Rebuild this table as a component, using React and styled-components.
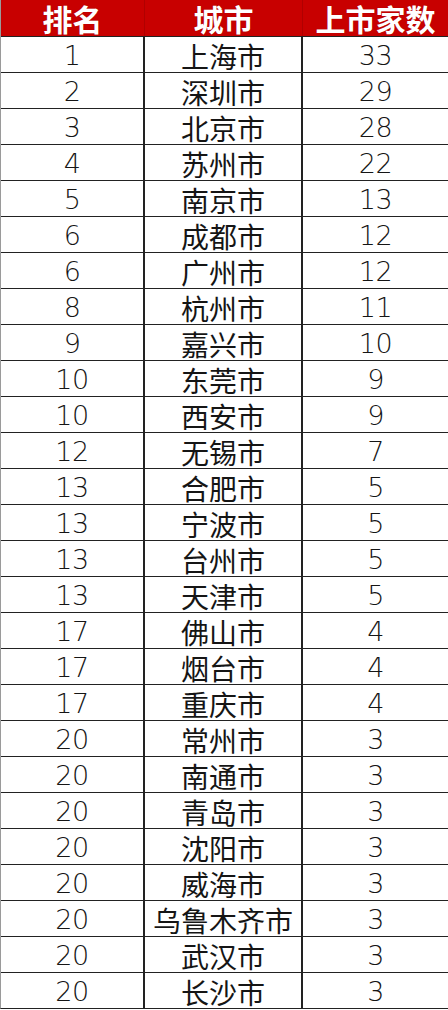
import React from "react";
import styled, { createGlobalStyle } from "styled-components";

const Global = createGlobalStyle`
  html, body { margin: 0; padding: 0; background: #fff; }
  body { font-family: "Noto Sans CJK SC", "Noto Sans", sans-serif; }
`;

const rows = [
  [1, "上海市", 33], [2, "深圳市", 29], [3, "北京市", 28], [4, "苏州市", 22],
  [5, "南京市", 13], [6, "成都市", 12], [6, "广州市", 12], [8, "杭州市", 11],
  [9, "嘉兴市", 10], [10, "东莞市", 9], [10, "西安市", 9], [12, "无锡市", 7],
  [13, "合肥市", 5], [13, "宁波市", 5], [13, "台州市", 5], [13, "天津市", 5],
  [17, "佛山市", 4], [17, "烟台市", 4], [17, "重庆市", 4], [20, "常州市", 3],
  [20, "南通市", 3], [20, "青岛市", 3], [20, "沈阳市", 3], [20, "威海市", 3],
  [20, "乌鲁木齐市", 3], [20, "武汉市", 3], [20, "长沙市", 3],
];

const Table = styled.div`
  width: 447px;
  display: grid;
  grid-template-columns: 144px 158px 145px;
  border-left: 1px solid #9a9a9a;
  border-bottom: 1px solid #222;
`;

const HeadCell = styled.div`
  height: 36px;
  display: flex;
  align-items: center;
  justify-content: center;
  background: #c80000;
  color: #fff;
  font-weight: 700;
  font-size: 30px;
  line-height: 1;
  white-space: nowrap;
  box-sizing: border-box;
  text-shadow: 0 0 1px rgba(120, 0, 0, 0.6);
  border-right: ${(p) => (p.$last ? "none" : "1px solid #b00000")};
`;

const Cell = styled.div`
  height: 36px;
  display: flex;
  align-items: center;
  justify-content: center;
  box-sizing: border-box;
  padding-top: 2px;
  border-top: 1px solid #222;
  border-right: ${(p) => (p.$last ? "none" : "2px solid #222")};
  color: #151515;
  font-size: ${(p) => (p.$num ? "27px" : "28px")};
  line-height: 1;
  white-space: nowrap;
  font-family: ${(p) =>
    p.$num ? '"DejaVu Sans", sans-serif' : '"Noto Sans CJK SC", sans-serif'};
  font-weight: ${(p) => (p.$num ? 300 : 400)};
  letter-spacing: ${(p) => (p.$num ? "-0.5px" : "0px")};
`;

export default function App() {
  return (
    <>
      <Global />
      <Table>
        <HeadCell>排名</HeadCell>
        <HeadCell>城市</HeadCell>
        <HeadCell $last>上市家数</HeadCell>
        {rows.map(([rank, city, count], i) => (
          <React.Fragment key={i}>
            <Cell $num>{rank}</Cell>
            <Cell>{city}</Cell>
            <Cell $num $last>{count}</Cell>
          </React.Fragment>
        ))}
      </Table>
    </>
  );
}
